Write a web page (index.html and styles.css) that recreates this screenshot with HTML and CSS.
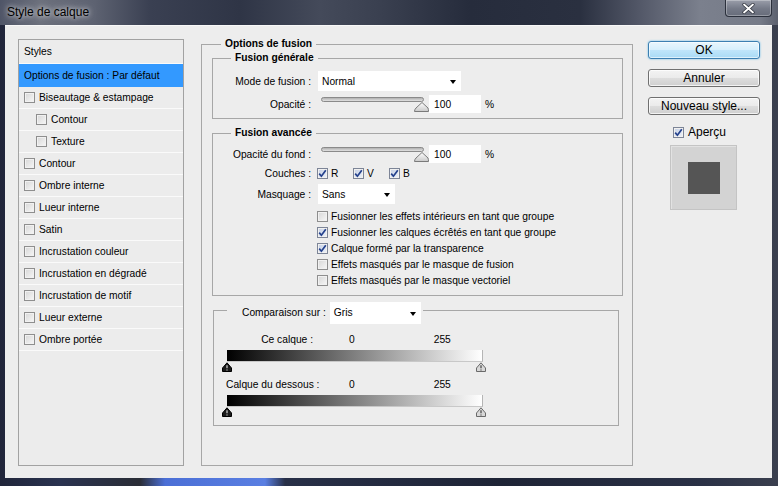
FILE: index.html
```html
<!DOCTYPE html>
<html lang="fr">
<head>
<meta charset="utf-8">
<title>Style de calque</title>
<link rel="stylesheet" href="styles.css">
</head>
<body>
<div class="window">
  <div class="titlebar">
    <span class="title">Style de calque</span>
    <div class="close">
      <svg width="13" height="11" viewBox="0 0 13 11"><path d="M2 1.5 L11 9.5 M11 1.5 L2 9.5" stroke="#2a2e38" stroke-width="3.2" stroke-linecap="round"/><path d="M2 1.5 L11 9.5 M11 1.5 L2 9.5" stroke="#ffffff" stroke-width="1.8" stroke-linecap="round"/></svg>
    </div>
  </div>
  <div class="client">
    <div class="stylelist">
      <div class="row head">Styles</div>
      <div class="row sel">Options de fusion : Par défaut</div>
      <div class="row"><span class="cb"></span>Biseautage &amp; estampage</div>
      <div class="row sub"><span class="cb"></span>Contour</div>
      <div class="row sub"><span class="cb"></span>Texture</div>
      <div class="row"><span class="cb"></span>Contour</div>
      <div class="row"><span class="cb"></span>Ombre interne</div>
      <div class="row"><span class="cb"></span>Lueur interne</div>
      <div class="row"><span class="cb"></span>Satin</div>
      <div class="row"><span class="cb"></span>Incrustation couleur</div>
      <div class="row"><span class="cb"></span>Incrustation en dégradé</div>
      <div class="row"><span class="cb"></span>Incrustation de motif</div>
      <div class="row"><span class="cb"></span>Lueur externe</div>
      <div class="row"><span class="cb"></span>Ombre portée</div>
    </div>

    <fieldset class="grp outer">
      <legend class="lg-outer">Options de fusion</legend>

      <fieldset class="grp general">
        <legend class="lg-inner">Fusion générale</legend>
        <div class="frow r-mode">
          <span class="lbl">Mode de fusion :</span>
          <div class="select s-mode"><span>Normal</span><i class="arr"></i></div>
        </div>
        <div class="frow r-op">
          <span class="lbl">Opacité :</span>
          <svg class="slider" width="108" height="18" viewBox="0 0 108 18">
            <defs>
              <linearGradient id="tr1" x1="0" y1="0" x2="0" y2="1"><stop offset="0" stop-color="#a9a9a9"/><stop offset="1" stop-color="#e9e9e9"/></linearGradient>
              <linearGradient id="th1" x1="0" y1="0" x2="0" y2="1"><stop offset="0" stop-color="#ffffff"/><stop offset="1" stop-color="#c9c9c9"/></linearGradient>
            </defs>
            <rect x="0.5" y="2.5" width="102" height="4" rx="2" fill="url(#tr1)" stroke="#8a8a8a"/>
            <path d="M93.5 16.5 Q93.5 14.5 95 13 L101 7.5 L107 13 Q107.5 14.5 107.5 16.5 Z" fill="url(#th1)" stroke="#7a7a7a"/>
          </svg>
          <div class="num">100</div>
          <span class="pct">%</span>
        </div>
      </fieldset>

      <fieldset class="grp advanced">
        <legend class="lg-inner">Fusion avancée</legend>
        <div class="frow r-op2">
          <span class="lbl">Opacité du fond :</span>
          <svg class="slider" width="108" height="18" viewBox="0 0 108 18">
            <defs>
              <linearGradient id="tr2" x1="0" y1="0" x2="0" y2="1"><stop offset="0" stop-color="#a9a9a9"/><stop offset="1" stop-color="#e9e9e9"/></linearGradient>
              <linearGradient id="th2" x1="0" y1="0" x2="0" y2="1"><stop offset="0" stop-color="#ffffff"/><stop offset="1" stop-color="#c9c9c9"/></linearGradient>
            </defs>
            <rect x="0.5" y="2.5" width="102" height="4" rx="2" fill="url(#tr2)" stroke="#8a8a8a"/>
            <path d="M93.5 16.5 Q93.5 14.5 95 13 L101 7.5 L107 13 Q107.5 14.5 107.5 16.5 Z" fill="url(#th2)" stroke="#7a7a7a"/>
          </svg>
          <div class="num">100</div>
          <span class="pct">%</span>
        </div>
        <div class="frow r-ch">
          <span class="lbl lbl-ch">Couches :</span>
          <span class="chk ch-item"><span class="cb on"><svg width="9" height="9" viewBox="0 0 9 9"><path d="M1.2 4.6 L3.4 7.2 L7.8 1.2" fill="none" stroke="#23408c" stroke-width="1.7"/></svg></span>R</span>
          <span class="chk ch-item"><span class="cb on"><svg width="9" height="9" viewBox="0 0 9 9"><path d="M1.2 4.6 L3.4 7.2 L7.8 1.2" fill="none" stroke="#23408c" stroke-width="1.7"/></svg></span>V</span>
          <span class="chk ch-item"><span class="cb on"><svg width="9" height="9" viewBox="0 0 9 9"><path d="M1.2 4.6 L3.4 7.2 L7.8 1.2" fill="none" stroke="#23408c" stroke-width="1.7"/></svg></span>B</span>
        </div>
        <div class="frow r-mask">
          <span class="lbl">Masquage :</span>
          <div class="select s-mask"><span>Sans</span><i class="arr"></i></div>
        </div>
        <div class="optlist">
          <div class="chk opt"><span class="cb"></span>Fusionner les effets intérieurs en tant que groupe</div>
          <div class="chk opt"><span class="cb on"><svg width="9" height="9" viewBox="0 0 9 9"><path d="M1.2 4.6 L3.4 7.2 L7.8 1.2" fill="none" stroke="#23408c" stroke-width="1.7"/></svg></span>Fusionner les calques écrêtés en tant que groupe</div>
          <div class="chk opt"><span class="cb on"><svg width="9" height="9" viewBox="0 0 9 9"><path d="M1.2 4.6 L3.4 7.2 L7.8 1.2" fill="none" stroke="#23408c" stroke-width="1.7"/></svg></span>Calque formé par la transparence</div>
          <div class="chk opt"><span class="cb"></span>Effets masqués par le masque de fusion</div>
          <div class="chk opt"><span class="cb"></span>Effets masqués par le masque vectoriel</div>
        </div>
      </fieldset>

      <fieldset class="grp compare">
        <legend class="lg-cmp">
          <span class="cmp-lbl">Comparaison sur :</span>
          <span class="select s-cmp"><span>Gris</span><i class="arr"></i></span>
        </legend>
        <div class="vrow first"><span class="vlbl">Ce calque :</span><span class="v0">0</span><span class="v255">255</span></div>
        <div class="grad"></div>
        <svg class="marks" width="265" height="10" viewBox="0 0 265 10">
          <path d="M0.5 9.5 L0.5 6 L5 0.8 L9.5 6 L9.5 9.5 Z" fill="#1a1a1a" stroke="#000"/>
          <path d="M5 3.2 V6.2 M5 7.4 V8.4" stroke="#d8d8d8" stroke-width="1.2"/>
          <path d="M254.5 9.5 L254.5 6 L259 0.8 L263.5 6 L263.5 9.5 Z" fill="#d8d8d8" stroke="#6a6a6a"/>
          <path d="M259 3.2 V6.2 M259 7.4 V8.4" stroke="#444" stroke-width="1.2"/>
        </svg>
        <div class="vrow second"><span class="vlbl">Calque du dessous :</span><span class="v0">0</span><span class="v255">255</span></div>
        <div class="grad"></div>
        <svg class="marks" width="265" height="10" viewBox="0 0 265 10">
          <path d="M0.5 9.5 L0.5 6 L5 0.8 L9.5 6 L9.5 9.5 Z" fill="#1a1a1a" stroke="#000"/>
          <path d="M5 3.2 V6.2 M5 7.4 V8.4" stroke="#d8d8d8" stroke-width="1.2"/>
          <path d="M254.5 9.5 L254.5 6 L259 0.8 L263.5 6 L263.5 9.5 Z" fill="#d8d8d8" stroke="#6a6a6a"/>
          <path d="M259 3.2 V6.2 M259 7.4 V8.4" stroke="#444" stroke-width="1.2"/>
        </svg>
      </fieldset>
    </fieldset>

    <div class="actions">
      <div class="btn ok">OK</div>
      <div class="btn">Annuler</div>
      <div class="btn">Nouveau style...</div>
      <div class="chk preview-chk"><span class="cb on"><svg width="9" height="9" viewBox="0 0 9 9"><path d="M1.2 4.6 L3.4 7.2 L7.8 1.2" fill="none" stroke="#23408c" stroke-width="1.7"/></svg></span>Aperçu</div>
      <div class="preview"><div class="swatch"></div></div>
    </div>
  </div>
</div>
</body>
</html>
```
FILE: styles.css
```css
* { box-sizing: border-box; }
html, body { margin: 0; padding: 0; }
body {
  width: 778px;
  height: 486px;
  overflow: hidden;
  font-family: "Liberation Sans", Arial, sans-serif;
  font-size: 10.25px;
  color: #000;
}

.window {
  width: 778px;
  height: 486px;
  display: flex;
  flex-direction: column;
  background: linear-gradient(90deg, #20253a 0, #2a3350 60px, #2a2d36 140px, #4b6fd6 165px, #5a7fe2 265px, #283048 285px, #1e2436 500px, #2a3146 700px, #3a3f4e 778px);
}

/* title bar */
.titlebar {
  height: 25px;
  flex: none;
  display: flex;
  justify-content: space-between;
  align-items: flex-start;
  background: linear-gradient(90deg, #4f5567 0, #6c707c 40px, #5d6271 95px, #3a4052 150px, #2f3546 240px, #444a5a 320px, #3a4050 380px, #262c3c 470px, #2a3040 580px, #535868 640px, #7b808d 700px, #767b88 760px, #5b606e 778px);
}
.title {
  font-size: 12px;
  line-height: 14px;
  padding: 5px 0 0 7px;
  color: #000;
  text-shadow: 0 0 5px rgba(255,255,255,.85), 0 0 10px rgba(255,255,255,.55);
}
.close {
  width: 47px;
  height: 17px;
  margin-right: 6px;
  border: 1px solid #2b303c;
  border-top: none;
  border-radius: 0 0 4px 4px;
  background: linear-gradient(#9a9eaa, #747987 55%, #676c7a);
  box-shadow: inset 0 0 0 1px rgba(255,255,255,.3);
  display: flex;
  align-items: center;
  justify-content: center;
}

/* client area */
.client {
  flex: 1;
  margin: 0 6px 8px 5px;
  background: #ededed;
  border-top: 1px solid #f8f8f8;
  display: flex;
  align-items: flex-start;
  padding: 11px 12px 0 13px;
}

/* styles list */
.stylelist {
  width: 166px;
  height: 427px;
  margin-top: 2px;
  flex: none;
  border: 1px solid #a2a2a2;
  background: #ececec;
}
.row {
  height: 22px;
  border-bottom: 1px solid #fafafa;
  display: flex;
  align-items: center;
  padding-left: 5px;
  gap: 4px;
  white-space: nowrap;
}
.row.head { height: 24px; }
.row.sel { height: 23px; background: #3399ff; color: #000; border-bottom-color: #3399ff; }
.row.sub { padding-left: 17px; }

/* checkboxes */
.cb {
  width: 11px;
  height: 11px;
  flex: none;
  border: 1px solid #8e8e8e;
  background: linear-gradient(135deg, #d6d6d6, #f7f7f7);
  box-shadow: inset 0 0 0 1px #f1f1f1;
  display: inline-flex;
  align-items: center;
  justify-content: center;
}
.cb.on {
  background: linear-gradient(135deg, #c4cfe4, #eef2f9);
  border-color: #7d8597;
}
.cb svg { display: block; }
.chk {
  display: flex;
  align-items: center;
  gap: 3px;
  white-space: nowrap;
}

/* group boxes */
.grp {
  margin: 0;
  padding: 0;
  min-width: 0;
  border: 1px solid #a7a7a7;
}
.grp legend {
  padding: 0 4px;
  line-height: 14px;
  font-weight: bold;
}
.outer {
  width: 432px;
  height: 429px;
  margin-left: 17px;
  flex: none;
  padding: 0 9px 0 10px;
}
.lg-outer { margin-left: 9px; }
.lg-inner { margin-left: 18px; }

.general { padding: 6px 0 5px; }
.advanced { margin-top: 7px; padding: 5px 0 7px; }

.frow { display: flex; align-items: center; }
.lbl {
  width: 98px;
  flex: none;
  text-align: right;
  margin-right: 6px;
  white-space: nowrap;
}
.r-mode { height: 20px; }
.r-op { height: 18px; margin-top: 4px; }
.r-op2 { height: 18px; }
.r-ch { height: 16px; margin-top: 2px; }
.r-mask { height: 20px; margin-top: 3px; }

.select {
  background: #fff;
  height: 20px;
  display: flex;
  align-items: center;
  justify-content: space-between;
  padding: 0 5px 0 4px;
  margin-left: 1px;
}
.s-mode { width: 143px; }
.s-mask { width: 77px; }
.arr {
  width: 0;
  height: 0;
  margin-top: 2px;
  border-left: 3.5px solid transparent;
  border-right: 3.5px solid transparent;
  border-top: 4px solid #000;
}

.slider { display: block; margin-left: 4px; flex: none; }
.num {
  width: 52px;
  height: 18px;
  background: #fff;
  padding-left: 5px;
  display: flex;
  align-items: center;
}
.pct { margin-left: 4px; }

.ch-item { width: 36px; }

.optlist { margin-top: 4px; padding-left: 104px; }
.opt { height: 16px; }

/* comparaison */
.compare {
  margin: 0 4px 0 1px;
  padding: 0 0 8px 12px;
}
.compare legend.lg-cmp {
  font-weight: normal;
  margin-left: 1px;
  padding: 6px 2px 0 15px;
  line-height: 22px;
  display: flex;
  align-items: center;
}
.s-cmp { width: 91px; height: 22px; margin-left: 4px; }
.cmp-lbl { white-space: nowrap; }

.vrow { display: flex; height: 14px; align-items: center; }
.vrow.first { margin-top: 8px; }
.vrow.second { margin-top: 5px; }
.vlbl { width: 87px; text-align: right; white-space: nowrap; flex: none; }
.v0 { margin-left: 36px; }
.v255 { margin-left: 79px; }
.grad {
  width: 256px;
  height: 12px;
  margin: 4px 0 0 1px;
  background: linear-gradient(90deg, #000, #fff);
  border-right: 1px solid #b5b5b5;
  border-bottom: 1px solid #c8c8c8;
}
.marks { display: block; margin-left: -4px; }

/* right column */
.actions {
  width: 112px;
  flex: none;
  margin-left: 15px;
  margin-top: 4px;
  display: flex;
  flex-direction: column;
}
.btn {
  height: 18px;
  border: 1px solid #707070;
  border-radius: 3px;
  background: linear-gradient(#f3f3f3 0, #ebebeb 48%, #dddddd 52%, #cfcfcf 100%);
  box-shadow: inset 0 0 0 1px rgba(255,255,255,.75);
  font-size: 12px;
  display: flex;
  align-items: center;
  justify-content: center;
  margin-bottom: 10px;
  white-space: nowrap;
}
.btn.ok {
  border-color: #3c7fb1;
  background: linear-gradient(#e9f6fd 0, #d6effc 48%, #bfe5fa 52%, #a9dbf6 100%);
  box-shadow: inset 0 0 0 1px rgba(255,255,255,.6), 0 0 2px #5ab8ec;
}
.preview-chk {
  height: 14px;
  margin-left: 25px;
  font-size: 12px;
  gap: 4px;
}
.preview {
  width: 67px;
  height: 65px;
  margin: 6px 0 0 22px;
  background: #d3d3d3;
  border: 1px solid #c4c4c4;
  box-shadow: inset 1px 1px 0 #e2e2e2;
  display: flex;
  align-items: center;
  justify-content: center;
}
.swatch {
  width: 32px;
  height: 32px;
  background: #555555;
}
```
